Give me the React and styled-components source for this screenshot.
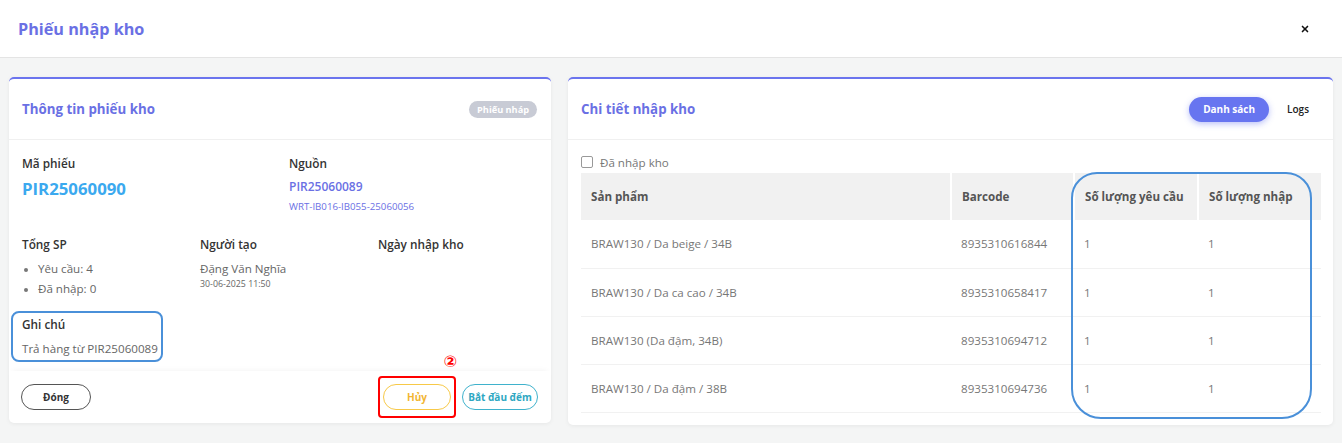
import React from 'react';
import styled, { createGlobalStyle } from 'styled-components';
import { X } from 'lucide-react';

const GlobalStyle = createGlobalStyle`
  * { box-sizing: border-box; }
  body {
    margin: 0;
    font-family: "Open Sans", "Noto Sans", sans-serif;
    background: #ffffff;
    color: #333;
  }
`;

const Page = styled.div`
  width: 1342px;
  height: 443px;
  display: flex;
  flex-direction: column;
  overflow: hidden;
`;

const ModalHeader = styled.header`
  height: 58px;
  display: flex;
  align-items: center;
  justify-content: space-between;
  padding: 0 32px 0 18px;
  border-bottom: 1px solid #e4e4e4;
  background: #fff;
`;

const ModalTitle = styled.h1`
  margin: 0;
  font-size: 16.2px;
  font-weight: 700;
  color: #6a70e4;
`;

const CloseButton = styled.button`
  border: 0;
  background: none;
  padding: 0;
  display: flex;
  color: #111;
  cursor: pointer;
`;

const ModalBody = styled.main`
  flex: 1;
  background: #f4f5f5;
  padding: 19px 9px 0 9px;
  display: grid;
  grid-template-columns: 542px 765px;
  column-gap: 17px;
  align-items: start;
`;

const Card = styled.section`
  background: #fff;
  border-top: 2px solid #6b74ee;
  border-radius: 5px;
  box-shadow: 0 1px 4px rgba(0, 0, 0, 0.06);
  display: flex;
  flex-direction: column;
`;

const CardHeader = styled.div`
  height: 61px;
  display: flex;
  align-items: center;
  justify-content: space-between;
  padding: 0 14px 0 13px;
  border-bottom: 1px solid #f0f0f0;
`;

const CardTitle = styled.h2`
  margin: 0;
  font-size: 13.3px;
  font-weight: 700;
  color: #6a70e4;
`;

const Badge = styled.span`
  background: #c8cbd5;
  color: #fff;
  font-size: 9.2px;
  font-weight: 700;
  border-radius: 10px;
  padding: 2px 8px;
  line-height: 13px;
`;

const InfoBody = styled.div`
  padding: 14px 13px 9px 13px;
  height: 231px;
`;

const InfoRow = styled.div`
  display: grid;
  grid-template-columns: ${(p) => p.$cols};
  margin-bottom: ${(p) => p.$gap || 0}px;
`;

const Label = styled.div`
  font-size: 11.8px;
  font-weight: 600;
  color: #333;
  line-height: 18px;
`;

const Code = styled.div`
  margin-top: 6px;
  font-size: 16.8px;
  font-weight: 700;
  line-height: 22px;
  color: #3ba9ef;
`;

const SourceCode = styled.div`
  margin-top: 6px;
  font-size: 12px;
  font-weight: 600;
  line-height: 18px;
  color: #6a70e4;
`;

const SubCode = styled.div`
  margin-top: 4px;
  font-size: 9.7px;
  line-height: 14px;
  color: #6a70e4;
`;

const List = styled.ul`
  margin: 6px 0 0 0;
  padding: 0 0 0 16px;
  font-size: 11.6px;
  line-height: 20px;
  color: #666;

  li::marker {
    color: #777;
    font-size: 10px;
  }
`;

const Muted = styled.div`
  margin-top: ${(p) => p.$mt || 0}px;
  font-size: ${(p) => p.$size || 11.6}px;
  line-height: ${(p) => p.$lh || 18}px;
  color: #666;
`;

const NoteBox = styled.div`
  display: inline-flex;
  flex-direction: column;
  margin-left: -11px;
  margin-top: -1px;
  padding: 2px 3px 2px 9px;
  border: 2px solid #4a90d9;
  border-radius: 8px;
`;

const CardFooter = styled.div`
  height: 52px;
  display: flex;
  align-items: center;
  justify-content: space-between;
  padding: 0 13px 0 12px;
  box-shadow: 0 -4px 6px -4px rgba(0, 0, 0, 0.06);
`;

const Actions = styled.div`
  display: flex;
  align-items: center;
  gap: 6px;
`;

const PillButton = styled.button`
  height: 26px;
  width: ${(p) => p.$w}px;
  border-radius: 13px;
  border: 1px solid ${(p) => p.$color};
  color: ${(p) => p.$text || p.$color};
  background: #fff;
  font-family: inherit;
  font-size: 10px;
  font-weight: 700;
  padding: 0;
  cursor: pointer;
`;

const Highlight = styled.div`
  position: relative;
  padding: 6px 3px;
  border: 2px solid #f00;
  border-radius: 4px;
  display: flex;
`;

const StepMark = styled.span`
  position: absolute;
  top: -24px;
  right: -3px;
  color: #f00;
  font-family: "DejaVu Sans", sans-serif;
  font-weight: 700;
  font-size: 16px;
  line-height: 16px;
`;

const Tabs = styled.div`
  display: flex;
  align-items: center;
  gap: 8px;
`;

const Tab = styled.button`
  height: 25px;
  padding: 0 ${(p) => (p.$active ? 14 : 10)}px;
  border: 0;
  border-radius: 13px;
  font-family: inherit;
  font-size: 10px;
  font-weight: ${(p) => (p.$active ? 700 : 600)};
  background: ${(p) => (p.$active ? '#6775f0' : 'transparent')};
  color: ${(p) => (p.$active ? '#fff' : '#222')};
  box-shadow: ${(p) => (p.$active ? '0 2px 6px rgba(103,117,240,0.45)' : 'none')};
  cursor: pointer;
`;

const DetailBody = styled.div`
  padding: 13px 12px 12px 13px;
`;

const CheckRow = styled.label`
  display: flex;
  align-items: center;
  gap: 7px;
  height: 18px;
  font-size: 11.6px;
  color: #777;
  margin-bottom: 2px;
`;

const CheckBox = styled.span`
  width: 12px;
  height: 12px;
  border: 1px solid #999;
  border-radius: 2px;
  background: #fff;
`;

const TableWrap = styled.div`
  position: relative;
`;

const Table = styled.table`
  width: 740px;
  border-collapse: collapse;
  table-layout: fixed;
  font-size: 11.6px;
`;

const Th = styled.th`
  height: 47px;
  background: #f1f1f1;
  text-align: left;
  padding: 0 10px;
  font-weight: 700;
  color: #555;
  border-right: 2px solid #fff;
  white-space: nowrap;

  &:last-child {
    border-right: 0;
  }
`;

const Td = styled.td`
  height: 48px;
  padding: 0 10px;
  color: #777;
  border-bottom: 1px solid #f1f1f1;
`;

const ColumnMark = styled.div`
  position: absolute;
  left: 490px;
  top: -1px;
  width: 241px;
  height: 247px;
  border: 2px solid #4a90d9;
  border-radius: 26px 26px 30px 30px;
  pointer-events: none;
`;

const rows = [
  ['BRAW130 / Da beige / 34B', '8935310616844', 1, 1],
  ['BRAW130 / Da ca cao / 34B', '8935310658417', 1, 1],
  ['BRAW130 (Da đậm, 34B)', '8935310694712', 1, 1],
  ['BRAW130 / Da đậm / 38B', '8935310694736', 1, 1],
];

const App = () => {
  return (
    <>
      <GlobalStyle />
      <Page>
        <ModalHeader>
          <ModalTitle>Phiếu nhập kho</ModalTitle>
          <CloseButton aria-label="close">
            <X size={10} strokeWidth={4} />
          </CloseButton>
        </ModalHeader>
        <ModalBody>
          <Card>
            <CardHeader>
              <CardTitle>Thông tin phiếu kho</CardTitle>
              <Badge>Phiếu nháp</Badge>
            </CardHeader>
            <InfoBody>
              <InfoRow $cols="267px 1fr" $gap={21}>
                <div>
                  <Label>Mã phiếu</Label>
                  <Code>PIR25060090</Code>
                </div>
                <div>
                  <Label>Nguồn</Label>
                  <SourceCode>PIR25060089</SourceCode>
                  <SubCode>WRT-IB016-IB055-25060056</SubCode>
                </div>
              </InfoRow>
              <InfoRow $cols="178px 178px 1fr" $gap={13}>
                <div>
                  <Label>Tổng SP</Label>
                  <List>
                    <li>Yêu cầu: 4</li>
                    <li>Đã nhập: 0</li>
                  </List>
                </div>
                <div>
                  <Label>Người tạo</Label>
                  <Muted $mt={7}>Đặng Văn Nghĩa</Muted>
                  <Muted $size={8.8} $lh={12}>30-06-2025 11:50</Muted>
                </div>
                <div>
                  <Label>Ngày nhập kho</Label>
                </div>
              </InfoRow>
              <NoteBox>
                <Label>Ghi chú</Label>
                <Muted $mt={7}>Trả hàng từ PIR25060089</Muted>
              </NoteBox>
            </InfoBody>
            <CardFooter>
              <PillButton $w={70} $color="#555" $text="#333">Đóng</PillButton>
              <Actions>
                <Highlight>
                  <StepMark>②</StepMark>
                  <PillButton $w={68} $color="#f7c948" $text="#f2b632">Hủy</PillButton>
                </Highlight>
                <PillButton $w={76} $color="#3fb2cc" $text="#2ea7c2">Bắt đầu đếm</PillButton>
              </Actions>
            </CardFooter>
          </Card>

          <Card>
            <CardHeader>
              <CardTitle>Chi tiết nhập kho</CardTitle>
              <Tabs>
                <Tab $active>Danh sách</Tab>
                <Tab>Logs</Tab>
              </Tabs>
            </CardHeader>
            <DetailBody>
              <CheckRow>
                <CheckBox />
                Đã nhập kho
              </CheckRow>
              <TableWrap>
                <Table>
                  <colgroup>
                    <col style={{ width: 370 }} />
                    <col style={{ width: 123 }} />
                    <col style={{ width: 124 }} />
                    <col style={{ width: 123 }} />
                  </colgroup>
                  <thead>
                    <tr>
                      <Th>Sản phẩm</Th>
                      <Th>Barcode</Th>
                      <Th>Số lượng yêu cầu</Th>
                      <Th>Số lượng nhập</Th>
                    </tr>
                  </thead>
                  <tbody>
                    {rows.map(([name, code, req, got]) => (
                      <tr key={code}>
                        <Td>{name}</Td>
                        <Td>{code}</Td>
                        <Td>{req}</Td>
                        <Td>{got}</Td>
                      </tr>
                    ))}
                  </tbody>
                </Table>
                <ColumnMark />
              </TableWrap>
            </DetailBody>
          </Card>
        </ModalBody>
      </Page>
    </>
  );
};

export default App;
